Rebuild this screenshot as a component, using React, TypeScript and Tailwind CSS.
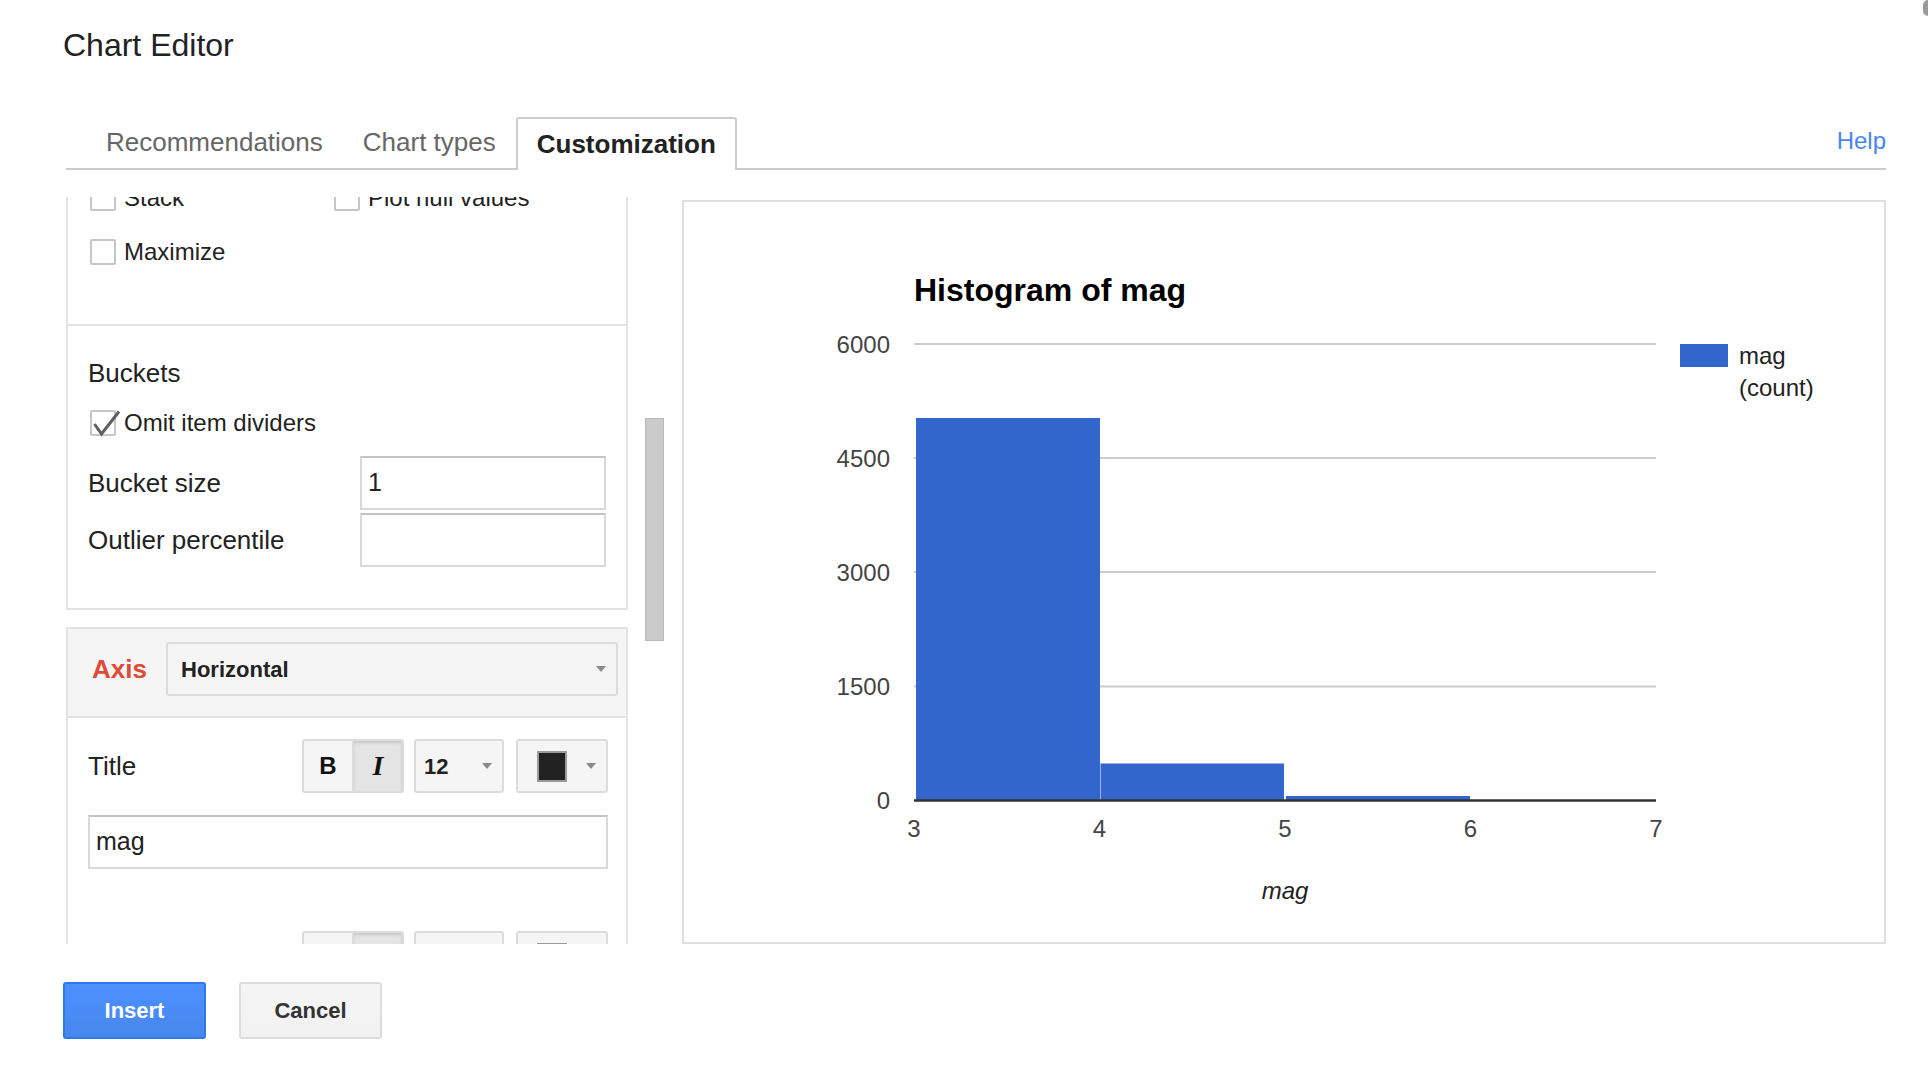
import React from "react";

function Checkbox({ checked }: { checked?: boolean }) {
  return (
    <span className="relative inline-block w-[26px] h-[26px] shrink-0 border-2 border-[#c6c6c6] rounded-[2px] bg-white">
      {checked && (
        <svg className="absolute -left-[2px] -top-[2px]" width="32" height="28" viewBox="0 0 32 28">
          <path d="M4.5 14 L11.5 24 L29 1.5" fill="none" stroke="#5f5f5f" strokeWidth="3" />
        </svg>
      )}
    </span>
  );
}

function Caret() {
  return (
    <svg width="10" height="6" viewBox="0 0 10 6" className="shrink-0">
      <path d="M0 0h10L5 6z" fill="#8a8a8a" />
    </svg>
  );
}

function CheckRow({ label, checked }: { label: string; checked?: boolean }) {
  return (
    <div className="flex items-center gap-[8px] h-[26px]">
      <Checkbox checked={checked} />
      <span className="text-[24px] leading-[26px] text-[#222]">{label}</span>
    </div>
  );
}

function TextBox({ value, className = "" }: { value?: string; className?: string }) {
  return (
    <div
      className={`flex items-center h-[54px] bg-white border-2 border-[#d9d9d9] border-t-[#c4c4c4] pl-[6px] text-[25px] text-[#222] ${className}`}
    >
      {value}
    </div>
  );
}

function Toolbar() {
  return (
    <div className="flex items-center">
      <div className="flex h-[54px] w-[102px] rounded-[3px] border-2 border-[#dcdcdc] overflow-hidden">
        <div className="flex-1 flex items-center justify-center bg-[#f5f5f5] border-r-2 border-[#dcdcdc]">
          <span className="font-bold text-[24px] text-[#111]">B</span>
        </div>
        <div className="flex-1 flex items-center justify-center bg-[#e4e4e4] shadow-[inset_0_2px_3px_rgba(0,0,0,0.12)]">
          <span className="font-['Liberation_Serif',serif] italic font-bold text-[28px] text-[#111]">I</span>
        </div>
      </div>
      <div className="ml-[10px] flex items-center justify-between h-[54px] w-[90px] rounded-[3px] border-2 border-[#dcdcdc] bg-[#f5f5f5] pl-[8px] pr-[10px]">
        <span className="font-bold text-[22px] text-[#222]">12</span>
        <Caret />
      </div>
      <div className="ml-[12px] flex items-center justify-between h-[54px] w-[92px] rounded-[3px] border-2 border-[#dcdcdc] bg-[#f5f5f5] pl-[19px] pr-[10px]">
        <span className="block w-[30px] h-[31px] bg-[#222] border-2 border-[#9a9a9a]" />
        <Caret />
      </div>
    </div>
  );
}

function HistogramChart() {
  const x0 = 230;
  const unit = 185.5;
  const grid = [
    { v: "6000", y: 142 },
    { v: "4500", y: 256 },
    { v: "3000", y: 370 },
    { v: "1500", y: 484.5 },
  ];
  const base = 598.5;
  const bars = [
    { x: 232, w: 184, top: 216 },
    { x: 416.5, w: 183.5, top: 561.5 },
    { x: 602, w: 184, top: 594 },
  ];
  return (
    <svg width="1200" height="740" viewBox="0 0 1200 740" className="block">
      <text x="230" y="99" fontSize="32" fontWeight="700" fill="#000" fontFamily="Liberation Sans, Arial, sans-serif">
        Histogram of mag
      </text>
      {grid.map((g) => (
        <g key={g.v}>
          <line x1={x0} x2={x0 + unit * 4} y1={g.y} y2={g.y} stroke="#cccccc" strokeWidth="2" />
          <text x="206" y={g.y + 8.5} fontSize="24" fill="#444" textAnchor="end" fontFamily="Liberation Sans, Arial, sans-serif">
            {g.v}
          </text>
        </g>
      ))}
      <text x="206" y={base + 8.5} fontSize="24" fill="#444" textAnchor="end" fontFamily="Liberation Sans, Arial, sans-serif">
        0
      </text>
      {bars.map((b, i) => (
        <rect key={i} x={b.x} y={b.top} width={b.w} height={base - b.top} fill="#3366cc" />
      ))}
      <line x1={x0} x2={x0 + unit * 4} y1={base} y2={base} stroke="#333" strokeWidth="2.5" />
      {[3, 4, 5, 6, 7].map((n, i) => (
        <text
          key={n}
          x={x0 + unit * i}
          y="634.5"
          fontSize="24"
          fill="#444"
          textAnchor="middle"
          fontFamily="Liberation Sans, Arial, sans-serif"
        >
          {n}
        </text>
      ))}
      <text x="601" y="697" fontSize="24" fontStyle="italic" fill="#222" textAnchor="middle" fontFamily="Liberation Sans, Arial, sans-serif">
        mag
      </text>
      <rect x="996" y="142" width="48" height="23" fill="#3366cc" />
      <text x="1055" y="162" fontSize="24" fill="#222" fontFamily="Liberation Sans, Arial, sans-serif">
        mag
      </text>
      <text x="1055" y="194" fontSize="24" fill="#222" fontFamily="Liberation Sans, Arial, sans-serif">
        (count)
      </text>
    </svg>
  );
}

export default function App() {
  return (
    <div className="relative w-[1928px] h-[1076px] overflow-hidden bg-white font-['Liberation_Sans',Arial,sans-serif] text-[#222]">
      <span className="absolute right-0 top-0 w-[5px] h-[16px] rounded-l-full bg-[#9a9a9a]" />

      <h1 className="pl-[63px] pt-[27px] text-[32px] leading-[36px] text-[#222]">Chart Editor</h1>

      <div className="mt-[54px] ml-[66px] w-[1820px] h-[53px] flex items-end border-b-2 border-[#cccccc] pl-[20px]">
        <div className="h-[51px] flex items-center px-[20px] text-[26px] text-[#666]">Recommendations</div>
        <div className="h-[51px] flex items-center px-[20px] text-[26px] text-[#666]">Chart types</div>
        <div className="h-[53px] -mb-[2px] flex items-center px-[19px] border-2 border-b-0 border-[#cccccc] rounded-t-[3px] bg-white text-[26px] font-bold text-[#222]">
          Customization
        </div>
        <a className="ml-auto self-center pb-[3px] text-[24px] text-[#4787ed]">Help</a>
      </div>

      <div className="flex ml-[66px] mt-[27px] h-[747px]">
        {/* scrolled options column */}
        <div className="w-[562px] h-full overflow-hidden">
          <div className="-mt-[12px] border-x-2 border-b-2 border-[#e3e3e3] pl-[22px] pb-[59px]">
            <div className="flex">
              <div className="w-[244px]">
                <CheckRow label="Stack" />
              </div>
              <CheckRow label="Plot null values" />
            </div>
            <div className="mt-[28px]">
              <CheckRow label="Maximize" />
            </div>
          </div>

          <div className="border-x-2 border-b-2 border-[#e3e3e3] pl-[20px] pr-[20px] pt-[32px] pb-[41px]">
            <div className="h-[30px] flex items-center text-[26px]">Buckets</div>
            <div className="mt-[22px] pl-[2px]">
              <CheckRow label="Omit item dividers" checked />
            </div>
            <div className="mt-[20px] flex items-center">
              <span className="w-[272px] text-[26px]">Bucket size</span>
              <TextBox value="1" className="flex-1" />
            </div>
            <div className="mt-[3px] flex items-center">
              <span className="w-[272px] text-[26px]">Outlier percentile</span>
              <TextBox className="flex-1" />
            </div>
          </div>

          <div className="mt-[17px] border-2 border-[#e3e3e3]">
            <div className="flex items-center bg-[#f5f5f5] border-b-2 border-[#e3e3e3] pl-[24px] pr-[8px] pt-[13px] pb-[20px]">
              <span className="w-[74px] text-[26px] font-bold text-[#dd4b39]">Axis</span>
              <div className="flex-1 flex items-center justify-between h-[54px] rounded-[3px] border-2 border-[#dcdcdc] bg-[#f5f5f5] pl-[13px] pr-[10px]">
                <span className="text-[22px] font-bold text-[#222]">Horizontal</span>
                <Caret />
              </div>
            </div>
            <div className="pl-[20px] pr-[18px] pt-[21px] pb-[40px]">
              <div className="flex items-center">
                <span className="text-[26px]">Title</span>
                <div className="ml-auto">
                  <Toolbar />
                </div>
              </div>
              <TextBox value="mag" className="mt-[22px] w-full" />
              <div className="mt-[62px] flex justify-end">
                <Toolbar />
              </div>
            </div>
          </div>
        </div>

        {/* scrollbar */}
        <div className="ml-[17px] w-[19px]">
          <div className="mt-[221px] h-[223px] bg-[#cbcbcb] border border-[#b9b9b9]" />
        </div>

        {/* chart preview */}
        <div className="ml-[18px] mt-[3px] w-[1204px] h-[744px] border-2 border-[#e0e0e0] bg-white overflow-hidden">
          <HistogramChart />
        </div>
      </div>

      <div className="flex gap-[33px] ml-[63px] mt-[38px]">
        <button className="w-[143px] h-[57px] rounded-[3px] border-2 border-[#3079ed] bg-gradient-to-b from-[#4d90fe] to-[#4787ed] text-[22px] font-bold text-white">
          Insert
        </button>
        <button className="w-[143px] h-[57px] rounded-[3px] border-2 border-[#dcdcdc] bg-gradient-to-b from-[#f5f5f5] to-[#f1f1f1] text-[22px] font-bold text-[#333]">
          Cancel
        </button>
      </div>
    </div>
  );
}
